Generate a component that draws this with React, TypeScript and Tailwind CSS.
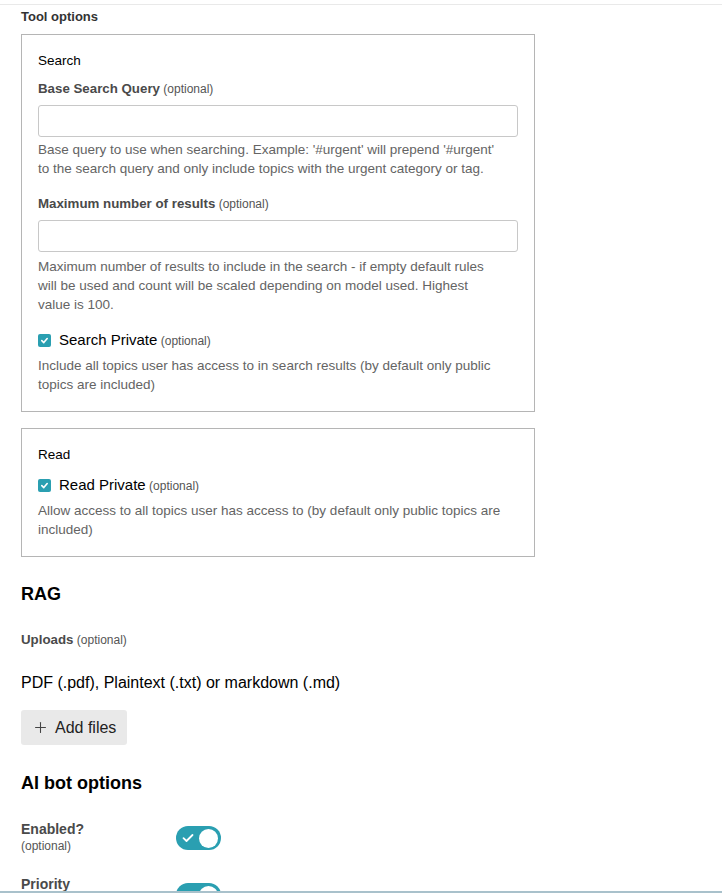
import { Plus } from 'lucide-react';

function Optional() {
  return <span className="text-[12px] font-normal text-[#555]"> (optional)</span>;
}

function Checkbox() {
  return (
    <span className="flex h-[13px] w-[13px] items-center justify-center rounded-[2px] bg-[#2a9fb1]">
      <svg width="9" height="9" viewBox="0 0 10 10" fill="none">
        <path d="M2 5.2 L4.2 7.3 L8 2.8" stroke="white" strokeWidth="1.8" strokeLinecap="round" strokeLinejoin="round" />
      </svg>
    </span>
  );
}

function Toggle() {
  return (
    <div className="flex h-[24px] w-[45px] items-center justify-between rounded-full bg-[#2a9fb1] pl-[6px] pr-[3px]">
      <svg width="12" height="10" viewBox="0 0 12 10" fill="none">
        <path d="M1.5 5.2 L4.5 8 L10.5 2" stroke="white" strokeWidth="1.8" strokeLinecap="round" strokeLinejoin="round" />
      </svg>
      <span className="h-[19px] w-[19px] rounded-full bg-white" />
    </div>
  );
}

export default function App() {
  return (
    <div className="flex h-[893px] flex-col overflow-hidden bg-white font-['Liberation_Sans',Arial,sans-serif] text-[13.5px] leading-[19px]">
      <div className="flex-1 overflow-hidden">
        <div className="mt-[4px] border-t border-[#e9e9e9]" />
        <div className="pl-[21px] pt-[2px]">
          {/* Tool options */}
          <h3 className="text-[13px] font-bold text-[#333]">Tool options</h3>

          <div className="mt-[8px] w-[514px] border border-[#b5b5b5] px-4 pt-[16px] pb-[17px]">
            <div className="text-black">Search</div>

            <label className="mt-[9px] block text-[13.3px] font-bold text-[#4a4a4a]">
              Base Search Query<Optional />
            </label>
            <input className="mt-[6px] block h-[32px] w-full rounded-[3px] border border-[#c8c8c8] px-2" />
            <p className="mt-[3px] max-w-[464px] text-[#646464]">
              Base query to use when searching. Example: '#urgent' will prepend '#urgent' to the search query and only include topics with the urgent category or tag.
            </p>

            <label className="mt-[16px] block text-[13.3px] font-bold text-[#4a4a4a]">
              Maximum number of results<Optional />
            </label>
            <input className="mt-[6px] block h-[32px] w-full rounded-[3px] border border-[#c8c8c8] px-2" />
            <p className="mt-[5px] max-w-[464px] text-[#646464]">
              Maximum number of results to include in the search - if empty default rules will be used and count will be scaled depending on model used. Highest value is 100.
            </p>

            <div className="mt-[16px] flex h-[20px] items-center gap-[8px]">
              <Checkbox />
              <span className="text-[15px] text-black">
                Search Private<Optional />
              </span>
            </div>
            <p className="mt-[6px] max-w-[464px] text-[#646464]">
              Include all topics user has access to in search results (by default only public topics are included)
            </p>
          </div>

          <div className="mt-[16px] w-[514px] border border-[#b5b5b5] px-4 pt-[16px] pb-[17px]">
            <div className="text-black">Read</div>
            <div className="mt-[11px] flex h-[20px] items-center gap-[8px]">
              <Checkbox />
              <span className="text-[15px] text-black">
                Read Private<Optional />
              </span>
            </div>
            <p className="mt-[6px] max-w-[464px] text-[#646464]">
              Allow access to all topics user has access to (by default only public topics are included)
            </p>
          </div>

          {/* RAG */}
          <h2 className="mt-[26px] text-[18px] font-bold leading-[22px] text-black">RAG</h2>
          <div className="mt-[25px] text-[13.3px] font-bold text-[#4a4a4a]">
            Uploads<Optional />
          </div>
          <div className="mt-[23px] text-[16px] leading-[20px] text-black">
            PDF (.pdf), Plaintext (.txt) or markdown (.md)
          </div>
          <button className="mt-[17px] flex h-[35px] items-center gap-[6px] rounded-[3px] bg-[#e9e9e9] pl-[11px] pr-[11px] text-[16px] text-[#222]">
            <Plus size={17} strokeWidth={1.5} className="text-[#444]" />
            Add files
          </button>

          {/* AI bot options */}
          <h2 className="mt-[26px] text-[18px] font-bold leading-[24px] text-black">AI bot options</h2>

          <div className="mt-[26px] flex items-start">
            <div className="w-[155px]">
              <div className="text-[14px] font-bold leading-[17px] text-[#4a4a4a]">Enabled?</div>
              <div className="text-[12px] leading-[16px] text-[#555]">(optional)</div>
            </div>
            <div className="pt-[5px]">
              <Toggle />
            </div>
          </div>

          <div className="mt-[22px] flex items-start">
            <div className="w-[155px]">
              <div className="text-[14px] font-bold leading-[17px] text-[#4a4a4a]">Priority</div>
            </div>
            <div className="pt-[7px]">
              <Toggle />
            </div>
          </div>
        </div>
      </div>
      <div className="h-[2px] bg-[#a9c1cb]" />
    </div>
  );
}
